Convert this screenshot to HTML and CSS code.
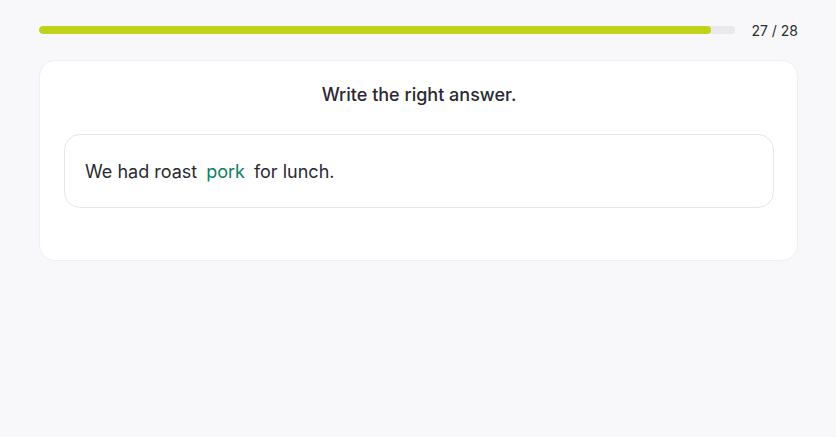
FILE: index.html
```html
<!DOCTYPE html>
<html>
<head>
<meta charset="utf-8">
<link rel="stylesheet" href="styles.css">
</head>
<body>
<div class="page">
  <div class="progress-row">
    <div class="track"><div class="fill" style="width: 96.43%"></div></div>
    <div class="count">27 / 28</div>
  </div>
  <div class="card">
    <div class="title">Write the right answer.</div>
    <div class="answer-box">
      <span>We had roast</span><span class="answer">pork</span><span>for lunch.</span>
    </div>
  </div>
</div>
</body>
</html>
```
FILE: styles.css
```css
* { box-sizing: border-box; }
html, body { margin: 0; padding: 0; }
body {
  background: #f8f8fa;
  font-family: Inter, "Noto Sans", sans-serif;
  color: #2a2a30;
  width: 836px;
  height: 437px;
}
.page {
  padding: 20px 38px 0 39px;
}
.progress-row {
  display: flex;
  align-items: center;
  gap: 16px;
  height: 20px;
}
.track {
  flex: 1;
  height: 8px;
  background: #e9e9ec;
  border-radius: 4px;
  overflow: hidden;
}
.fill {
  height: 100%;
  background: #c0d21a;
  border-radius: 4px;
}
.count {
  font-size: 14px;
  color: #2e2e33;
  white-space: nowrap;
  flex: none;
}
.card {
  margin-top: 20px;
  background: #fff;
  border: 1px solid #efeff1;
  border-radius: 16px;
  padding: 22px 23px 52px 24px;
}
.title {
  text-align: center;
  font-size: 18px;
  font-weight: 500;
  line-height: 24px;
}
.answer-box {
  margin-top: 27px;
  border: 1px solid #e6e6e9;
  border-radius: 16px;
  height: 74px;
  display: flex;
  align-items: center;
  padding: 0 20px;
  font-size: 18px;
  gap: 9px;
}
.answer {
  color: #0a8060;
  font-weight: 400;
}
```
